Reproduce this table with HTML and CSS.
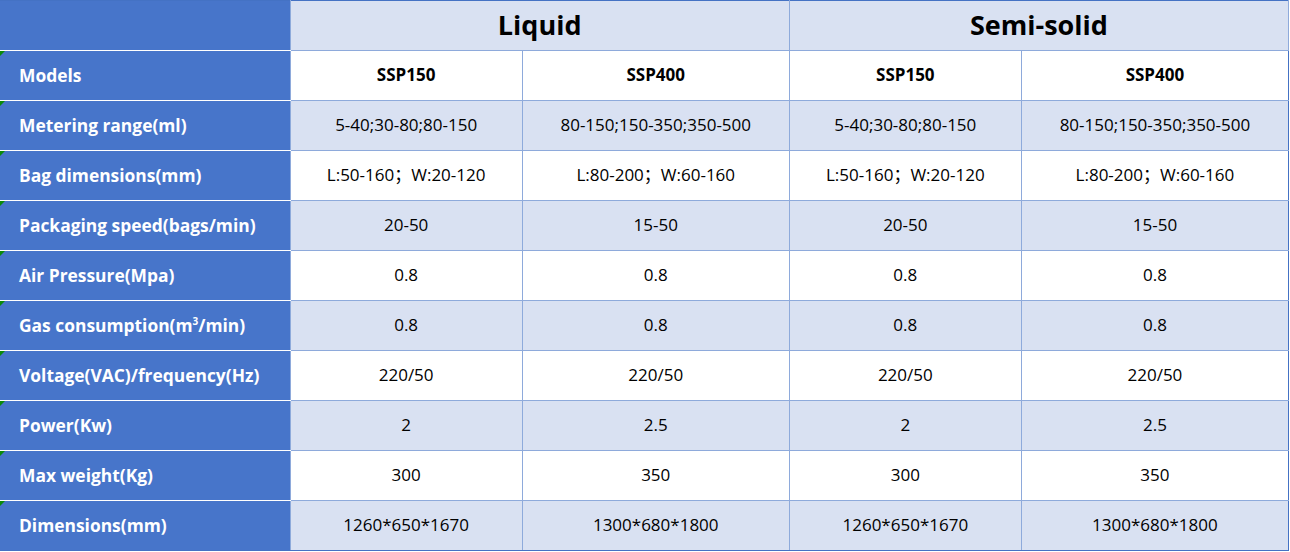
FILE: index.html
```html
<!DOCTYPE html>
<html>
<head>
<meta charset="utf-8">
<link rel="stylesheet" href="styles.css">
</head>
<body>
<table class="spec">
  <colgroup>
    <col class="c0"><col class="c1"><col class="c2"><col class="c1"><col class="c2">
  </colgroup>
  <tr class="head">
    <td class="label blank"></td>
    <td colspan="2" class="group">Liquid</td>
    <td colspan="2" class="group">Semi-solid</td>
  </tr>
  <tr class="white">
    <td class="label">Models</td>
    <td class="model">SSP150</td><td class="model">SSP400</td><td class="model">SSP150</td><td class="model">SSP400</td>
  </tr>
  <tr class="tint">
    <td class="label">Metering range(ml)</td>
    <td>5-40;30-80;80-150</td><td>80-150;150-350;350-500</td><td>5-40;30-80;80-150</td><td>80-150;150-350;350-500</td>
  </tr>
  <tr class="white">
    <td class="label">Bag dimensions(mm)</td>
    <td>L:50-160；W:20-120</td><td>L:80-200；W:60-160</td><td>L:50-160；W:20-120</td><td>L:80-200；W:60-160</td>
  </tr>
  <tr class="tint">
    <td class="label">Packaging speed(bags/min)</td>
    <td>20-50</td><td>15-50</td><td>20-50</td><td>15-50</td>
  </tr>
  <tr class="white">
    <td class="label">Air Pressure(Mpa)</td>
    <td>0.8</td><td>0.8</td><td>0.8</td><td>0.8</td>
  </tr>
  <tr class="tint">
    <td class="label">Gas consumption(m<sup class="sup">3</sup>/min)</td>
    <td>0.8</td><td>0.8</td><td>0.8</td><td>0.8</td>
  </tr>
  <tr class="white">
    <td class="label">Voltage(VAC)/frequency(Hz)</td>
    <td>220/50</td><td>220/50</td><td>220/50</td><td>220/50</td>
  </tr>
  <tr class="tint">
    <td class="label">Power(Kw)</td>
    <td>2</td><td>2.5</td><td>2</td><td>2.5</td>
  </tr>
  <tr class="white">
    <td class="label">Max weight(Kg)</td>
    <td>300</td><td>350</td><td>300</td><td>350</td>
  </tr>
  <tr class="tint last">
    <td class="label">Dimensions(mm)</td>
    <td>1260*650*1670</td><td>1300*680*1800</td><td>1260*650*1670</td><td>1300*680*1800</td>
  </tr>
</table>
</body>
</html>
```
FILE: styles.css
```css
html, body {
  margin: 0;
  padding: 0;
  background: #ffffff;
}
body {
  font-family: "Open Sans", "Noto Sans CJK SC", sans-serif;
  color: #000000;
}
.spec {
  border-collapse: collapse;
  table-layout: fixed;
  width: 1289px;
}
.c0 { width: 290px; }
.c1 { width: 232px; }
.c2 { width: 267px; }
.spec tr { height: 50px; }
.spec td {
  border: 1px solid #8eaadb;
  text-align: center;
  vertical-align: middle;
  font-size: 17px;
  line-height: 22px;
  padding: 0 0 2px 0;
  white-space: nowrap;
}
.spec tr.head td { border-top: 1px solid #4472c4; background: #d9e1f2; }
.spec tr:last-child td { border-bottom: 1px solid #4472c4; }
.spec td:last-child { border-right: 1px solid #4472c4; }
.spec tr.head td:last-child { border-right: 1px solid #8eaadb; }
.white td { background: #ffffff; }
.tint td { background: #d9e1f2; }
.spec td.label {
  background: #4775ca;
  color: #ffffff;
  font-weight: 700;
  font-size: 17.4px;
  text-align: left;
  padding-left: 19px;
  border-left: none;
  border-top: 1px solid #ffffff;
  border-bottom: 1px solid #ffffff;
  position: relative;
}
.spec tr.head td.label { border-top: 1px solid #4472c4; background: #4775ca; }
.spec tr.last td.label { border-bottom: 1px solid #4472c4; }
.spec td.label:not(.blank)::before {
  content: "";
  position: absolute;
  left: 0;
  top: 0;
  border-top: 5px solid #0a8a0a;
  border-right: 5px solid transparent;
}
.spec td.group {
  font-size: 27px;
  line-height: 32px;
  font-weight: 700;
}
.spec td.model { font-weight: 700; }
.sup {
  font-size: 10px;
  vertical-align: 7px;
  line-height: 0;
}
```
